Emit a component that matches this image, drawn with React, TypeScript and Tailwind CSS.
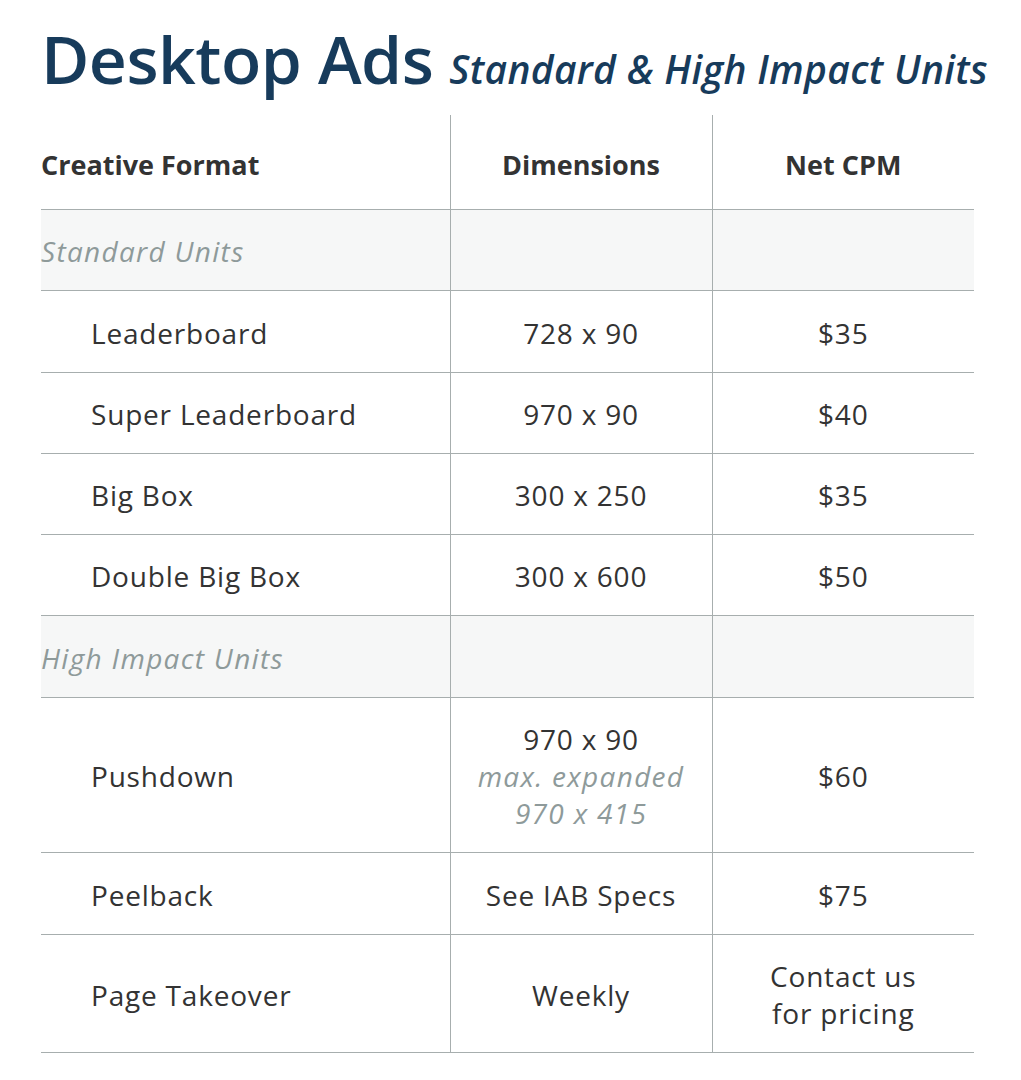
type Row =
  | { kind: 'section'; label: string; h: string }
  | { kind: 'item'; name: string; dim: React.ReactNode; cpm: React.ReactNode; h: string }

const rows: Row[] = [
  { kind: 'section', label: 'Standard Units', h: 'h-[81px]' },
  { kind: 'item', name: 'Leaderboard', dim: '728 x 90', cpm: '$35', h: 'h-[82px]' },
  { kind: 'item', name: 'Super Leaderboard', dim: '970 x 90', cpm: '$40', h: 'h-[81px]' },
  { kind: 'item', name: 'Big Box', dim: '300 x 250', cpm: '$35', h: 'h-[81px]' },
  { kind: 'item', name: 'Double Big Box', dim: '300 x 600', cpm: '$50', h: 'h-[81px]' },
  { kind: 'section', label: 'High Impact Units', h: 'h-[82px]' },
  {
    kind: 'item',
    name: 'Pushdown',
    dim: (
      <>
        970 x 90
        <br />
        <span className="italic tracking-[1.3px] text-[#8e9a9a]">max. expanded</span>
        <br />
        <span className="italic tracking-[1.3px] text-[#8e9a9a]">970 x 415</span>
      </>
    ),
    cpm: '$60',
    h: 'h-[155px]',
  },
  { kind: 'item', name: 'Peelback', dim: 'See IAB Specs', cpm: '$75', h: 'h-[82px]' },
  {
    kind: 'item',
    name: 'Page Takeover',
    dim: 'Weekly',
    cpm: (
      <>
        Contact us
        <br />
        for pricing
      </>
    ),
    h: 'h-[118px]',
  },
]

export default function App() {
  return (
    <div className="min-h-screen bg-white font-['Open_Sans',sans-serif] text-[#333333]">
      <div className="pl-[41px] pr-[47px] pt-[15px]">
        <h1 className="flex items-baseline gap-[16px] whitespace-nowrap text-[#173b5b]">
          <span className="text-[66px] font-semibold leading-[86px] tracking-[-0.5px]">Desktop Ads</span>
          <span className="text-[39px] font-semibold italic leading-[50px] tracking-[0.3px]">
            Standard &amp; High Impact Units
          </span>
        </h1>

        <table className="mt-[14px] w-[933px] border-collapse text-[28px] leading-[37px] tracking-[0.8px]">
          <thead>
            <tr className="h-[94px] border-b border-[#a7aeae]">
              <th className="w-[409px] pt-[6px] text-left text-[27px] font-bold tracking-normal">Creative Format</th>
              <th className="w-[262px] border-l border-[#a7aeae] pt-[6px] text-center text-[27px] font-bold tracking-normal">
                Dimensions
              </th>
              <th className="w-[262px] border-l border-[#a7aeae] pt-[6px] text-center text-[27px] font-bold tracking-normal">
                Net CPM
              </th>
            </tr>
          </thead>
          <tbody>
            {rows.map((row, idx) =>
              row.kind === 'section' ? (
                <tr key={idx} className={`${row.h} border-b border-[#a7aeae] bg-[#f6f7f7]`}>
                  <td className="pt-[4px] italic tracking-[1.3px] text-[#8e9a9a]">{row.label}</td>
                  <td className="border-l border-[#a7aeae]" />
                  <td className="border-l border-[#a7aeae]" />
                </tr>
              ) : (
                <tr key={idx} className={`${row.h} border-b border-[#a7aeae]`}>
                  <td className="pl-[50px] pt-[4px]">{row.name}</td>
                  <td className="border-l border-[#a7aeae] pt-[4px] text-center">{row.dim}</td>
                  <td className="border-l border-[#a7aeae] pt-[4px] text-center">{row.cpm}</td>
                </tr>
              ),
            )}
          </tbody>
        </table>
      </div>
    </div>
  )
}
